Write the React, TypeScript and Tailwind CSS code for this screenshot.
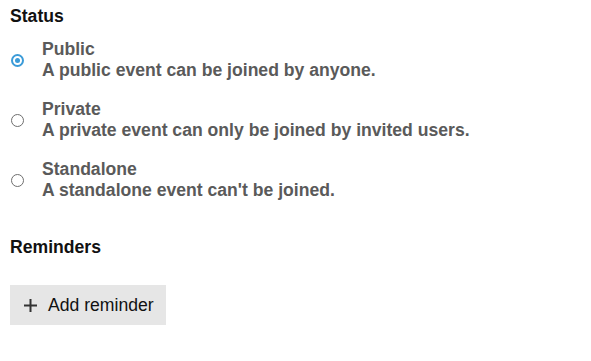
import { useState } from "react";

type Status = "public" | "private" | "standalone";

const options: { value: Status; label: string; description: string }[] = [
  { value: "public", label: "Public", description: "A public event can be joined by anyone." },
  { value: "private", label: "Private", description: "A private event can only be joined by invited users." },
  { value: "standalone", label: "Standalone", description: "A standalone event can't be joined." },
];

function Radio({ checked }: { checked: boolean }) {
  return checked ? (
    <span className="flex h-[13px] w-[13px] shrink-0 items-center justify-center rounded-full border-2 border-[#3b9bd8] bg-white">
      <span className="h-[5px] w-[5px] rounded-full bg-[#3b9bd8]" />
    </span>
  ) : (
    <span className="h-[13px] w-[13px] shrink-0 rounded-full border-[1.5px] border-[#6e6e6e] bg-white" />
  );
}

export default function App() {
  const [status, setStatus] = useState<Status>("public");

  return (
    <div className="min-h-screen bg-white px-[10px] pt-[6px] font-['Liberation_Sans',Arial,sans-serif] text-[17.6px] leading-[21px]">
      <h2 className="font-bold text-[#111]">Status</h2>

      <div className="mt-[12px] flex flex-col gap-[18px]">
        {options.map((o) => (
          <label
            key={o.value}
            className="flex cursor-pointer items-center gap-[18px] pl-[1px]"
            onClick={() => setStatus(o.value)}
          >
            <Radio checked={status === o.value} />
            <span className="flex flex-col font-bold text-[#5a5a5a]">
              <span>{o.label}</span>
              <span>{o.description}</span>
            </span>
          </label>
        ))}
      </div>

      <h2 className="mt-[36px] font-bold text-[#111]">Reminders</h2>

      <button className="mt-[27px] flex h-[40px] w-[156px] items-center gap-[11px] bg-[#e6e6e6] pl-[14px] text-[#111]">
        <svg width="13" height="13" viewBox="0 0 13 13" className="shrink-0">
          <path d="M6.5 0v13M0 6.5h13" stroke="#333" strokeWidth="2" />
        </svg>
        <span>Add reminder</span>
      </button>
    </div>
  );
}
